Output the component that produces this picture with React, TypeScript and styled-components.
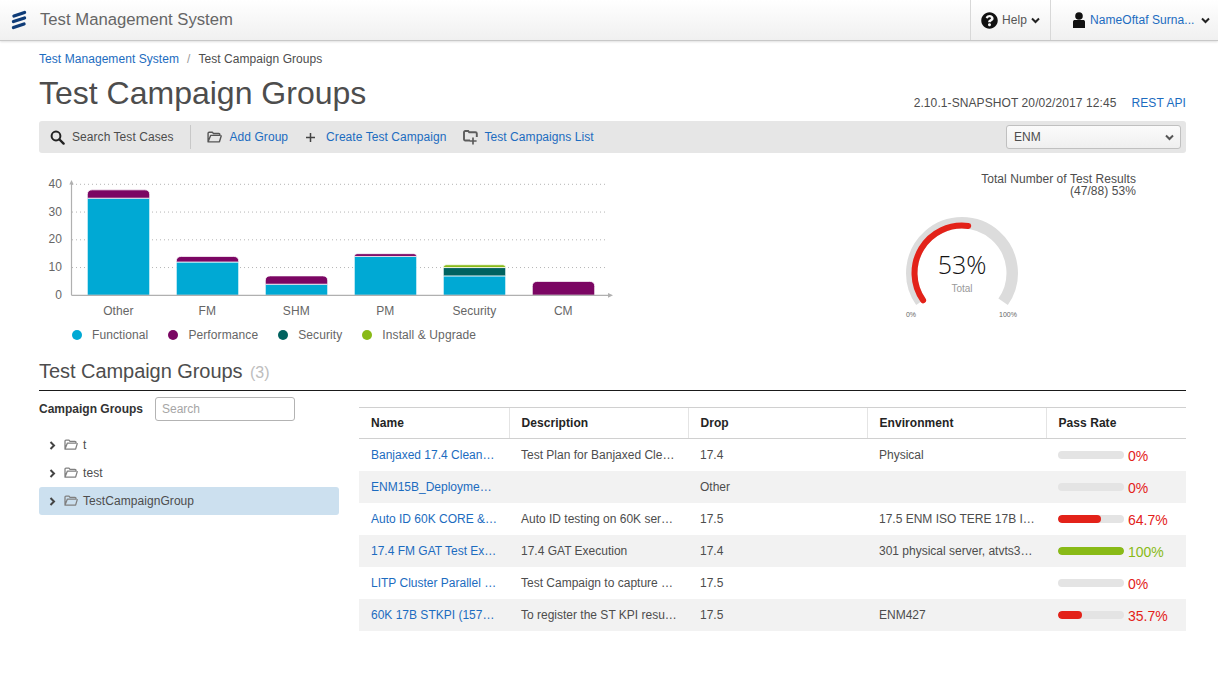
import React from "react";
import styled, { createGlobalStyle } from "styled-components";
import { FaQuestionCircle } from "react-icons/fa";

const GlobalStyle = createGlobalStyle`
  html, body {
    margin: 0;
    padding: 0;
    background: #fff;
    color: #333;
    font-family: "Liberation Sans", Arial, sans-serif;
    font-size: 12px;
    letter-spacing: 0.06px;
  }
`;

const LINK = "#1c6cc0";
const RED = "#e32219";
const GREEN = "#89ba17";
const BLUE = "#00a9d4";
const PURPLE = "#7b0663";
const TEAL = "#00625f";

const TopBar = styled.header`
  display: flex;
  align-items: stretch;
  height: 40px;
  background: linear-gradient(#fff, #f0f0f0);
  border-bottom: 1px solid #c8c8c8;
  box-shadow: 0 1px 2px rgba(0, 0, 0, 0.12);
`;

const Brand = styled.div`
  display: flex;
  align-items: center;
  flex: 1;
  padding-left: 11px;
  gap: 13px;
  font-size: 16.7px;
  letter-spacing: 0;
  color: #666;
`;

const TopItem = styled.div<{ $width: number; $pad: number }>`
  display: flex;
  align-items: center;
  width: ${(p) => p.$width}px;
  box-sizing: border-box;
  border-left: 1px solid #d8d8d8;
  padding-left: ${(p) => p.$pad}px;
  gap: 4px;
  font-size: 12px;
  color: #555;
`;

const UserName = styled.span`
  color: ${LINK};
  margin-right: 3px;
`;

const Page = styled.main`
  padding: 0 32px 0 39px;
`;

const Breadcrumb = styled.nav`
  display: flex;
  gap: 8px;
  padding-top: 11px;
  height: 20px;
  line-height: 14px;
  color: #4d4d4d;
`;

const BreadLink = styled.a`
  color: ${LINK};
`;

const Slash = styled.span`
  color: #999;
`;

const TitleRow = styled.div`
  display: flex;
  justify-content: space-between;
  align-items: flex-end;
  height: 49px;
`;

const Title = styled.h1`
  margin: 0 0 6px;
  font-size: 32px;
  font-weight: 400;
  line-height: 44px;
  letter-spacing: 0;
  color: #4d4d4d;
`;

const Version = styled.div`
  display: flex;
  gap: 15px;
  line-height: 14px;
  padding-bottom: 11px;
  letter-spacing: 0.09px;
  color: #4d4d4d;
`;

const Toolbar = styled.div`
  display: flex;
  align-items: center;
  height: 32px;
  background: #e6e6e6;
  border-radius: 3px;
  padding: 0 5px 0 11px;
  color: #4d4d4d;
`;

const ToolItem = styled.a<{ $link?: boolean; $gap?: number }>`
  display: flex;
  align-items: center;
  gap: ${(p) => p.$gap ?? 7}px;
  margin-right: 17px;
  color: ${(p) => (p.$link ? LINK : "#4d4d4d")};
`;

const ToolDivider = styled.span`
  width: 1px;
  height: 24px;
  background: #c8c8c8;
  margin: 0 16px 0 -1px;
`;

const SelectBox = styled.div`
  margin-left: auto;
  display: flex;
  align-items: center;
  justify-content: space-between;
  box-sizing: border-box;
  width: 175px;
  height: 24px;
  padding: 0 6px 0 7px;
  border: 1px solid #c0c0c0;
  border-radius: 3px;
  background: linear-gradient(#fbfbfb, #efefef);
  color: #4d4d4d;
`;

const Charts = styled.section`
  display: flex;
  justify-content: space-between;
  height: 197px;
`;

const ChartColumn = styled.div`
  width: 590px;
  margin-left: -11px;
  padding-top: 22px;
`;

const BarSvg = styled.svg`
  display: block;
  font-family: "Liberation Sans", Arial, sans-serif;
`;

const Legend = styled.ul`
  display: flex;
  list-style: none;
  margin: 6px 0 0 44px;
  padding: 0;
  gap: 20px;
  color: #666;
  letter-spacing: 0.1px;
`;

const LegendItem = styled.li`
  display: flex;
  align-items: center;
  gap: 10px;
  line-height: 14px;
`;

const LegendDot = styled.span<{ $color: string }>`
  width: 10px;
  height: 10px;
  border-radius: 50%;
  background: ${(p) => p.$color};
`;

const GaugeColumn = styled.div`
  width: 280px;
  margin-right: 50px;
  padding-top: 20px;
`;

const GaugeCaption = styled.div`
  text-align: right;
  line-height: 12px;
  color: #4d4d4d;
`;

const GaugeSvg = styled.svg`
  display: block;
  margin: 9px 0 0 36px;
  font-family: "Liberation Sans", Arial, sans-serif;
  letter-spacing: 0;
`;

const SectionHead = styled.h2`
  margin: 0;
  height: 41px;
  box-sizing: border-box;
  padding-top: 7px;
  border-bottom: 1px solid #1a1a1a;
  font-size: 20px;
  line-height: 28px;
  font-weight: 400;
  letter-spacing: -0.05px;
  color: #4d4d4d;
`;

const Count = styled.span`
  font-size: 16px;
  color: #bdbdbd;
  margin-left: 2px;
`;

const Content = styled.div`
  display: flex;
  gap: 20px;
`;

const Side = styled.aside`
  width: 300px;
  flex: none;
`;

const SideHead = styled.div`
  display: flex;
  align-items: center;
  gap: 12px;
  padding-top: 6px;
  font-weight: 700;
  letter-spacing: 0;
`;

const SearchInput = styled.input`
  box-sizing: border-box;
  width: 140px;
  height: 24px;
  padding: 0 6px;
  border: 1px solid #b3b3b3;
  border-radius: 3px;
  font: 12px "Liberation Sans", Arial, sans-serif;
  &::placeholder {
    color: #a6a6a6;
    opacity: 1;
  }
`;

const Tree = styled.div`
  margin-top: 10px;
`;

const TreeRow = styled.div<{ $active?: boolean }>`
  display: flex;
  align-items: center;
  height: 28px;
  padding-left: 10px;
  border-radius: 3px;
  color: #4d4d4d;
  background: ${(p) => (p.$active ? "#cce0ef" : "transparent")};
`;

const TreeFolder = styled.span`
  display: flex;
  margin: 0 5px 0 8px;
`;

const TableWrap = styled.div`
  flex: 1;
  min-width: 0;
`;

const Table = styled.table`
  width: 100%;
  table-layout: fixed;
  border-collapse: collapse;
  margin-top: 16px;
`;

const Th = styled.th<{ $width: number }>`
  width: ${(p) => p.$width}px;
  height: 31px;
  box-sizing: border-box;
  padding: 0 12px;
  text-align: left;
  font-size: 12px;
  color: #242424;
  border-top: 1px solid #d0d0d0;
  border-bottom: 1px solid #d0d0d0;
  border-left: 1px solid #e4e4e4;
  &:first-child {
    border-left: 0;
  }
`;

const Tr = styled.tr`
  &:nth-child(even) {
    background: #f2f2f2;
  }
`;

const Td = styled.td<{ $link?: boolean }>`
  height: 32px;
  padding: 0 12px;
  box-sizing: border-box;
  white-space: nowrap;
  letter-spacing: 0;
  color: ${(p) => (p.$link ? LINK : "#4d4d4d")};
`;

const RateCell = styled.div`
  display: flex;
  align-items: center;
  gap: 4px;
`;

const Track = styled.div`
  flex: none;
  width: 66px;
  height: 8px;
  border-radius: 4px;
  overflow: hidden;
  background: #e4e4e4;
`;

const Fill = styled.div<{ $color: string }>`
  height: 100%;
  border-radius: 4px;
  background: ${(p) => p.$color};
`;

const RateValue = styled.span<{ $color: string }>`
  margin-top: 2px;
  font-size: 14px;
  color: ${(p) => p.$color};
`;

const Logo = () => (
  <svg width="16" height="20" viewBox="0 0 16 20">
    <g stroke="#0f3c78" strokeWidth="3.4" strokeLinecap="round">
      <line x1="3" y1="6" x2="13.5" y2="2.5" />
      <line x1="2.5" y1="11.5" x2="13.5" y2="8" />
      <line x1="2.5" y1="17.5" x2="13" y2="14" />
    </g>
  </svg>
);

const ChevronDown = ({ color = "#222" }: { color?: string }) => (
  <svg width="9" height="7" viewBox="0 0 9 7">
    <polyline points="1,1.5 4.5,5 8,1.5" fill="none" stroke={color} strokeWidth="2" />
  </svg>
);

const ChevronRight = () => (
  <svg width="7" height="9" viewBox="0 0 7 9">
    <polyline points="1.5,1 5,4.5 1.5,8" fill="none" stroke="#444" strokeWidth="2" />
  </svg>
);

const UserIcon = () => (
  <svg width="14" height="16" viewBox="0 0 14 16">
    <circle cx="7" cy="4" r="3.8" fill="#111" />
    <path d="M1 16V9.6C1 8.6 1.8 8 3 8h8c1.2 0 2 .6 2 1.6V16z" fill="#111" />
  </svg>
);

const SearchIcon = () => (
  <svg width="15" height="15" viewBox="0 0 15 15">
    <circle cx="6" cy="6" r="4.4" fill="none" stroke="#222" strokeWidth="2" />
    <line x1="9.5" y1="9.5" x2="13.6" y2="13.6" stroke="#222" strokeWidth="2.4" strokeLinecap="round" />
  </svg>
);

const FolderIcon = ({ color = "#666", width = 14 }: { color?: string; width?: number }) => (
  <svg width={width} height={width * 0.8} viewBox="0 0 14 11">
    <path
      d="M1 10V2c0-.6.4-1 1-1h3l1 1.2h5c.6 0 1 .4 1 1V4H3.4L1 10h10.6L13.4 4"
      fill="none"
      stroke={color}
      strokeWidth="1.3"
      strokeLinejoin="round"
    />
  </svg>
);

const PlusIcon = () => (
  <svg width="11" height="11" viewBox="0 0 11 11">
    <path d="M5.5 1v9M1 5.5h9" stroke="#444" strokeWidth="1.5" />
  </svg>
);

const FolderPlusIcon = () => (
  <svg width="15" height="15" viewBox="0 0 15 15">
    <path
      d="M7 10.5H2.2C1.5 10.5 1 10 1 9.3V2.2C1 1.5 1.5 1 2.2 1h3l1 1.3h6.2c.8 0 1.4.6 1.4 1.3V7"
      fill="none"
      stroke="#5c5c5c"
      strokeWidth="1.9"
    />
    <path d="M10 7.5v7M6.8 11h6.8" stroke="#5c5c5c" strokeWidth="1.7" />
  </svg>
);

const axisY = (v: number) => 295.3 - v * 2.775;

type Segment = { value: number; color: string };
type Group = { label: string; segments: Segment[] };

const groups: Group[] = [
  { label: "Other", segments: [{ value: 35, color: BLUE }, { value: 3, color: PURPLE }] },
  { label: "FM", segments: [{ value: 12, color: BLUE }, { value: 2, color: PURPLE }] },
  { label: "SHM", segments: [{ value: 4, color: BLUE }, { value: 3, color: PURPLE }] },
  { label: "PM", segments: [{ value: 14, color: BLUE }, { value: 1, color: PURPLE }] },
  {
    label: "Security",
    segments: [
      { value: 7, color: BLUE },
      { value: 3, color: TEAL },
      { value: 1, color: GREEN },
    ],
  },
  { label: "CM", segments: [{ value: 5, color: PURPLE }] },
];

const segmentPath = (x: number, w: number, top: number, bottom: number, rounded: boolean) => {
  if (!rounded) return `M${x} ${bottom}V${top}H${x + w}V${bottom}Z`;
  const r = Math.min(5, bottom - top);
  return `M${x} ${bottom}V${top + r}Q${x} ${top} ${x + r} ${top}H${x + w - r}Q${x + w} ${top} ${x + w} ${top + r}V${bottom}Z`;
};

// chart is drawn in page coordinates, shifted by the viewBox origin
const BarChart = () => (
  <BarSvg width="590" height="147" viewBox="28 175 590 147">
    {[40, 30, 20, 10].map((v) => (
      <line
        key={v}
        x1="72"
        x2="606"
        y1={axisY(v)}
        y2={axisY(v)}
        stroke="#b5b5b5"
        strokeDasharray="1 3"
      />
    ))}
    {[0, 10, 20, 30, 40].map((v) => (
      <text key={v} x="62" y={axisY(v) + 3.5} textAnchor="end" fontSize="12" fill="#666">
        {v}
      </text>
    ))}
    {groups.map((group, i) => {
      const x = 87.3 + i * 89;
      let total = 0;
      return (
        <g key={group.label}>
          {group.segments.map((segment, j) => {
            const bottom = axisY(total);
            total += segment.value;
            const top = axisY(total);
            return (
              <path
                key={j}
                d={segmentPath(x, 62.4, top, bottom, j === group.segments.length - 1)}
                fill={segment.color}
                stroke="#fff"
                strokeOpacity="0.75"
                strokeWidth="1"
              />
            );
          })}
          <text x={x + 31} y="315" textAnchor="middle" fontSize="12" fill="#666">
            {group.label}
          </text>
        </g>
      );
    })}
    <path d="M71.5 295.3V183M71.5 295.3H608" stroke="#b0b0b0" strokeWidth="1.2" fill="none" />
    <path d="M71.5 180l-2.2 4.5h4.4zM613 295.3l-5 -2.4v4.8z" fill="#b0b0b0" />
  </BarSvg>
);

const polar = (r: number, deg: number) => {
  const a = (deg * Math.PI) / 180;
  return `${(70 + r * Math.cos(a)).toFixed(2)} ${(67 + r * Math.sin(a)).toFixed(2)}`;
};

const arc = (r: number, from: number, to: number) =>
  `M${polar(r, from)}A${r} ${r} 0 ${to - from > 180 ? 1 : 0} 1 ${polar(r, to)}`;

const Gauge = () => (
  <GaugeSvg width="140" height="118" viewBox="0 0 140 118">
    <path d={arc(50.2, 145, 395)} fill="none" stroke="#dcdcdc" strokeWidth="11.5" />
    <path
      d={arc(47.5, 145, 145 + 250 * 0.53)}
      fill="none"
      stroke={RED}
      strokeWidth="6"
      strokeLinecap="round"
    />
    <text x="70" y="67.5" textAnchor="middle" fontSize="25" fill="#111" fontFamily="Open Sans, sans-serif" fontWeight="300">
      53%
    </text>
    <text x="70" y="86" textAnchor="middle" fontSize="10" fill="#999">
      Total
    </text>
    <text x="19" y="111" textAnchor="middle" fontSize="7" fill="#666">
      0%
    </text>
    <text x="116" y="111" textAnchor="middle" fontSize="7" fill="#666">
      100%
    </text>
  </GaugeSvg>
);

type Row = {
  name: string;
  description: string;
  drop: string;
  environment: string;
  rate: number;
};

const rows: Row[] = [
  { name: "Banjaxed 17.4 Clean…", description: "Test Plan for Banjaxed Cle…", drop: "17.4", environment: "Physical", rate: 0 },
  { name: "ENM15B_Deployme…", description: "", drop: "Other", environment: "", rate: 0 },
  { name: "Auto ID 60K CORE &…", description: "Auto ID testing on 60K ser…", drop: "17.5", environment: "17.5 ENM ISO TERE 17B I…", rate: 64.7 },
  { name: "17.4 FM GAT Test Ex…", description: "17.4 GAT Execution", drop: "17.4", environment: "301 physical server, atvts3…", rate: 100 },
  { name: "LITP Cluster Parallel …", description: "Test Campaign to capture …", drop: "17.5", environment: "", rate: 0 },
  { name: "60K 17B STKPI (157…", description: "To register the ST KPI resu…", drop: "17.5", environment: "ENM427", rate: 35.7 },
];

const columns = [
  { label: "Name", width: 150 },
  { label: "Description", width: 179 },
  { label: "Drop", width: 179 },
  { label: "Environment", width: 179 },
  { label: "Pass Rate", width: 140 },
];

const App: React.FC = () => {
  return (
    <>
      <GlobalStyle />
      <TopBar>
        <Brand>
          <Logo />
          Test Management System
        </Brand>
        <TopItem $width={80} $pad={10}>
          <FaQuestionCircle size={17} color="#111" />
          Help
          <ChevronDown />
        </TopItem>
        <TopItem $width={168} $pad={21}>
          <UserIcon />
          <UserName>NameOftaf Surna...</UserName>
          <ChevronDown />
        </TopItem>
      </TopBar>
      <Page>
        <Breadcrumb>
          <BreadLink>Test Management System</BreadLink>
          <Slash>/</Slash>
          <span>Test Campaign Groups</span>
        </Breadcrumb>
        <TitleRow>
          <Title>Test Campaign Groups</Title>
          <Version>
            <span>2.10.1-SNAPSHOT 20/02/2017 12:45</span>
            <BreadLink>REST API</BreadLink>
          </Version>
        </TitleRow>
        <Toolbar>
          <ToolItem>
            <SearchIcon />
            Search Test Cases
          </ToolItem>
          <ToolDivider />
          <ToolItem $link $gap={8}>
            <FolderIcon color="#555" width={15} />
            Add Group
          </ToolItem>
          <ToolItem $link $gap={10}>
            <PlusIcon />
            Create Test Campaign
          </ToolItem>
          <ToolItem $link $gap={6}>
            <FolderPlusIcon />
            Test Campaigns List
          </ToolItem>
          <SelectBox>
            ENM
            <ChevronDown color="#555" />
          </SelectBox>
        </Toolbar>
        <Charts>
          <ChartColumn>
            <BarChart />
            <Legend>
              <LegendItem>
                <LegendDot $color={BLUE} />
                Functional
              </LegendItem>
              <LegendItem>
                <LegendDot $color={PURPLE} />
                Performance
              </LegendItem>
              <LegendItem>
                <LegendDot $color={TEAL} />
                Security
              </LegendItem>
              <LegendItem>
                <LegendDot $color={GREEN} />
                Install &amp; Upgrade
              </LegendItem>
            </Legend>
          </ChartColumn>
          <GaugeColumn>
            <GaugeCaption>
              Total Number of Test Results
              <br />
              (47/88) 53%
            </GaugeCaption>
            <Gauge />
          </GaugeColumn>
        </Charts>
        <SectionHead>
          Test Campaign Groups <Count>(3)</Count>
        </SectionHead>
        <Content>
          <Side>
            <SideHead>
              Campaign Groups
              <SearchInput placeholder="Search" />
            </SideHead>
            <Tree>
              {["t", "test", "TestCampaignGroup"].map((name) => (
                <TreeRow key={name} $active={name === "TestCampaignGroup"}>
                  <ChevronRight />
                  <TreeFolder>
                    <FolderIcon color="#808080" />
                  </TreeFolder>
                  {name}
                </TreeRow>
              ))}
            </Tree>
          </Side>
          <TableWrap>
            <Table>
              <thead>
                <tr>
                  {columns.map((column) => (
                    <Th key={column.label} $width={column.width}>
                      {column.label}
                    </Th>
                  ))}
                </tr>
              </thead>
              <tbody>
                {rows.map((row) => {
                  const color = row.rate === 100 ? GREEN : RED;
                  return (
                    <Tr key={row.name}>
                      <Td $link>{row.name}</Td>
                      <Td>{row.description}</Td>
                      <Td>{row.drop}</Td>
                      <Td>{row.environment}</Td>
                      <Td>
                        <RateCell>
                          <Track>
                            <Fill $color={color} style={{ width: `${row.rate}%` }} />
                          </Track>
                          <RateValue $color={color}>{row.rate}%</RateValue>
                        </RateCell>
                      </Td>
                    </Tr>
                  );
                })}
              </tbody>
            </Table>
          </TableWrap>
        </Content>
      </Page>
    </>
  );
};

export default App;
